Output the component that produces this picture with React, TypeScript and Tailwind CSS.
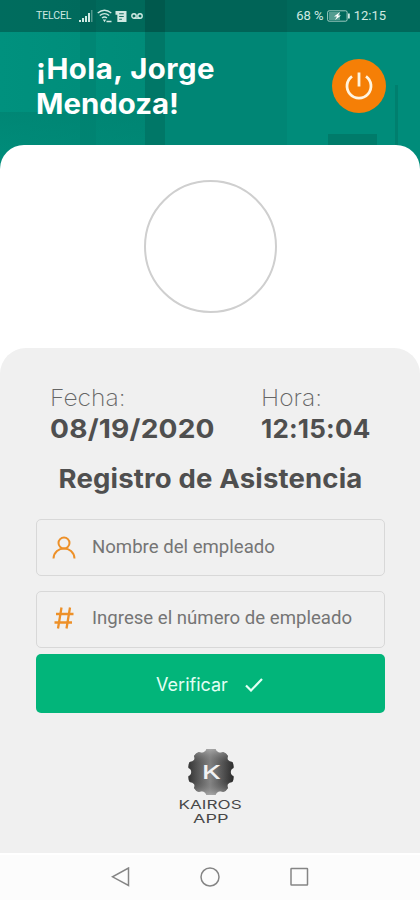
import { useState } from 'react';

const font = "font-['Inter',sans-serif]";

function StatusBar() {
  return (
    <div className="relative flex h-8 items-center justify-between bg-black/25 pl-9 pr-[34px] font-['Roboto',sans-serif] text-[#cfe9e2]">
      <div className="flex items-center">
        <span className="w-[35px] text-[10.5px] tracking-[-0.1px]">TELCEL</span>
        <svg className="ml-2 h-[13px] w-[14px]" viewBox="0 0 14 13" fill="currentColor">
          <path d="M0 10h2v2H0zM3 8h2v4H3zM6 6h2v6H6zM9 3h2v9H9z" />
          <path d="M12 0h1.500v12H12z" opacity=".4" />
        </svg>
        <svg className="ml-[4px] h-[14px] w-[15px]" viewBox="0 0 15 14" fill="none" stroke="currentColor" strokeWidth="1.300">
          <path d="M.7 4Q7.500-1.500 14.300 4M2.800 6.500Q7.500 2.600 12.200 6.500M5 9Q7.500 7 10 9" />
          <path d="M6.500 10.500l1 1.500 1-1.500M9.500 12.500h5" />
        </svg>
        <svg className="ml-[3px] h-[11px] w-3" viewBox="0 0 12 12">
          <path d="M0 0h12v12H2V4H0z" fill="currentColor" />
          <path d="M4 3h5M4 6h5M4 9h3" stroke="#006557" strokeWidth="1" />
        </svg>
        <svg className="ml-[4px] h-2 w-3" viewBox="0 0 12 8" fill="none" stroke="currentColor" strokeWidth="1.400">
          <circle cx="3" cy="4" r="2.200" />
          <circle cx="9" cy="4" r="2.200" />
          <path d="M3 6.200h6" />
        </svg>
      </div>
      <div className="flex items-center text-[13px]">
        <span className="text-[13px]">68 %</span>
        <svg className="ml-[3px] mr-[4px] h-3 w-[23px]" viewBox="0 0 23 12" fill="none">
          <rect x=".6" y=".8" width="19.500" height="10.400" rx="1.500" stroke="currentColor" opacity=".75" />
          <path d="M2 2h11v8H2z" fill="currentColor" opacity=".4" />
          <path d="M21 3.500h1.800v5H21z" fill="currentColor" />
          <path d="M13 2L7 6.500h3L8 10l6-4.500h-3z" fill="#fff" />
        </svg>
        <span>12:15</span>
      </div>
    </div>
  );
}

function Logo() {
  return (
    <div className="flex flex-col items-center">
      <svg className="h-[48px] w-[50px]" viewBox="0 0 50 48">
        <defs>
          <linearGradient id="gear" x1="0" x2="1" y1="0" y2="0">
            <stop offset="0" stopColor="#303030" />
            <stop offset=".48" stopColor="#8b8b8b" />
            <stop offset="1" stopColor="#242424" />
          </linearGradient>
          <linearGradient id="shine" x1="0" x2="0" y1="0" y2="1">
            <stop offset="0" stopColor="#b5b5b5" stopOpacity=".7" />
            <stop offset=".3" stopColor="#555" stopOpacity=".2" />
            <stop offset=".7" stopColor="#555" stopOpacity=".1" />
            <stop offset="1" stopColor="#b5b5b5" stopOpacity=".7" />
          </linearGradient>
        </defs>
        {['url(#gear)', 'url(#shine)'].map((fill) => (
          <g key={fill} fill={fill} transform="translate(-2.500 0) scale(1.100 1)">
            <path d="M21 1h8q1 3 3 3.500t4-.5q3 1 4.500 4-1 2.500 0 4t4 2q1.500 3 1 6-2.500 1-2.500 4t2.500 4q.5 3-1 6-3 .5-4 2t0 4q-1.500 3-4.500 4-2-1-4-.5t-3 3.500h-8q-1-3-3-3.500t-4 .5q-3-1-4.500-4 1-2.500 0-4t-4-2q-1.500-3-1-6 2.500-1 2.500-4t-2.500-4q-.5-3 1-6 3-.5 4-2t0-4q1.500-3 4.500-4 2 1 4 .5t3-3.500z" />
          </g>
        ))}
        <text x="25.500" y="31" fill="#f2f2f2" fontFamily="Inter" fontSize="19" fontWeight="500" textAnchor="middle" textLength="19" lengthAdjust="spacingAndGlyphs">K</text>
      </svg>
      <div className="mt-[2px] flex flex-col items-center font-['Inter',sans-serif] text-[12px] font-normal leading-[14px] text-[#484848]">
        <span className="scale-x-[1.43]">KAIROS</span>
        <span className="scale-x-[1.5]">APP</span>
      </div>
    </div>
  );
}

export default function App() {
  const [name, setName] = useState('');
  const [number, setNumber] = useState('');

  return (
    <div className={`relative flex h-[900px] w-[420px] flex-col overflow-hidden bg-[#008c7a] ${font}`}>
      {/* faded office photo behind the header */}
      <div className="absolute left-0 top-0 h-[180px] w-[165px] bg-linear-to-r from-[#00917e] to-[#008b78]" />
      <div className="absolute left-[80px] top-0 h-[180px] w-[16px] bg-[#008674]" />
      <div className="absolute left-[145px] top-0 h-[180px] w-[20px] bg-[#007767]" />
      <div className="absolute left-[165px] top-0 h-[180px] w-[122px] bg-[#008675]" />
      <div className="absolute left-0 top-[112px] h-[60px] w-[145px] bg-linear-to-b from-[#00806f]/60 to-[#00806f]/20" />
      <div className="absolute left-[328px] top-[134px] h-[20px] w-[49px] bg-[#007b6a]" />
      <div className="absolute left-[395px] top-[85px] h-[70px] w-[3px] bg-[#007f6e]" />

      <StatusBar />

      <header className="relative flex h-[113px] shrink-0 items-start justify-between pl-9 pr-[34px] pt-[20px]">
        <h1 className="origin-left scale-x-[1.05] text-[28px] font-bold leading-[35px] text-white">
          <span className="block tracking-[0.45px]">¡Hola, Jorge</span>
          <span className="block">Mendoza!</span>
        </h1>
        <button className="mt-[7px] flex size-[54px] items-center justify-center rounded-full bg-[#f57f06]">
          <svg className="size-[30px]" viewBox="0 0 30 30" fill="none" stroke="#fff4df" strokeWidth="2.800">
            <path d="M15 1.500v14M8 5.300a12 12 0 1 0 14 0" />
          </svg>
        </button>
      </header>

      <main className="relative flex h-[708px] shrink-0 flex-col rounded-t-[24px] bg-white">
        <div className="flex h-[203px] shrink-0 justify-center pt-[35px]">
          <div className="size-[133px] rounded-full border-2 border-[#cfcfcf]" />
        </div>

        <section className="flex flex-1 flex-col rounded-t-[26px] bg-[#f0f0f0] pl-[36px] pr-[35px] pt-[36px]">
          <div className="flex pl-[14px] text-[#4f4f4f]">
            <div className="w-[211px]">
              <p className="origin-left scale-x-[1.07] text-[23px] font-extralight leading-[29px] text-[#666]">Fecha:</p>
              <p className="origin-left scale-x-[1.08] text-[26px] font-bold leading-[32px] tracking-[0.2px]">08/19/2020</p>
            </div>
            <div>
              <p className="origin-left scale-x-[1.07] text-[23px] font-extralight leading-[29px] text-[#666]">Hora:</p>
              <p className="text-[26px] font-bold leading-[32px] tracking-[0.2px]">12:15:04</p>
            </div>
          </div>
          <h2 className="mt-[18px] scale-x-[1.06] text-center text-[26px] font-bold leading-[32px] tracking-[0.15px] text-[#4f4f4f]">
            Registro de Asistencia
          </h2>

          <div className="mt-[24px] flex flex-col gap-[15px]">
            <label className="flex h-[57px] items-center rounded-[5px] border border-[#d8d8d8] pl-[15px]">
              <svg className="size-[24px] shrink-0" viewBox="0 0 24 24" fill="none" stroke="#ed9028" strokeWidth="2">
                <circle cx="12" cy="7" r="5.500" />
                <path d="M1.500 22.500c.7-13.300 20.300-13.300 21 0" />
              </svg>
              <input
                value={name}
                onChange={(e) => setName(e.target.value)}
                placeholder="Nombre del empleado"
                className="ml-4 w-[280px] bg-transparent font-['Roboto',sans-serif] text-[18.6px] text-[#757575] outline-none placeholder:text-[#757575]"
              />
            </label>
            <label className="flex h-[57px] items-center rounded-[5px] border border-[#d8d8d8] pl-[15px]">
              <svg className="mb-[3px] size-[24px] shrink-0" viewBox="0 0 24 24" fill="none" stroke="#ed9028" strokeWidth="2.300">
                <path d="M9.500 1.500l-3.500 21M18 1.500l-3.500 21M4 8h17.500M2.500 16.500h17.500" />
              </svg>
              <input
                value={number}
                onChange={(e) => setNumber(e.target.value)}
                placeholder="Ingrese el número de empleado"
                className="mb-[2px] ml-4 w-[280px] bg-transparent font-['Roboto',sans-serif] text-[18.6px] text-[#757575] outline-none placeholder:text-[#757575]"
              />
            </label>
          </div>
          <button className="mt-[6px] flex h-[59px] shrink-0 items-center justify-center rounded-[5px] bg-[#02b57a] pr-[2px] pt-[2px] text-[18px] text-[#e2fff4]">
            Verificar
            <svg className="ml-[17px] h-[14px] w-[18px]" viewBox="0 0 18 14" fill="none" stroke="currentColor" strokeWidth="2.200">
              <path d="M1 7.500l5 5L17 1" />
            </svg>
          </button>

          <div className="mt-[35px]">
            <Logo />
          </div>
        </section>
      </main>

      <nav className="relative flex h-[47px] shrink-0 items-center justify-between border-t-2 border-white bg-[#fcfcfc] px-[111px]">
        <svg className="mb-[2px] size-5" viewBox="0 0 20 20" fill="none" stroke="#858585" strokeWidth="1.500">
          <path d="M17.500 1v17.500L1.500 9.800z" />
        </svg>
        <svg className="mb-[2px] size-5" viewBox="0 0 20 20" fill="none" stroke="#858585" strokeWidth="1.500">
          <circle cx="10" cy="10" r="9" />
        </svg>
        <svg className="mb-[2px] size-5" viewBox="0 0 20 20" fill="none" stroke="#858585" strokeWidth="1.500">
          <rect x="2" y="1.500" width="16.500" height="16.500" rx=".5" />
        </svg>
      </nav>
    </div>
  );
}
